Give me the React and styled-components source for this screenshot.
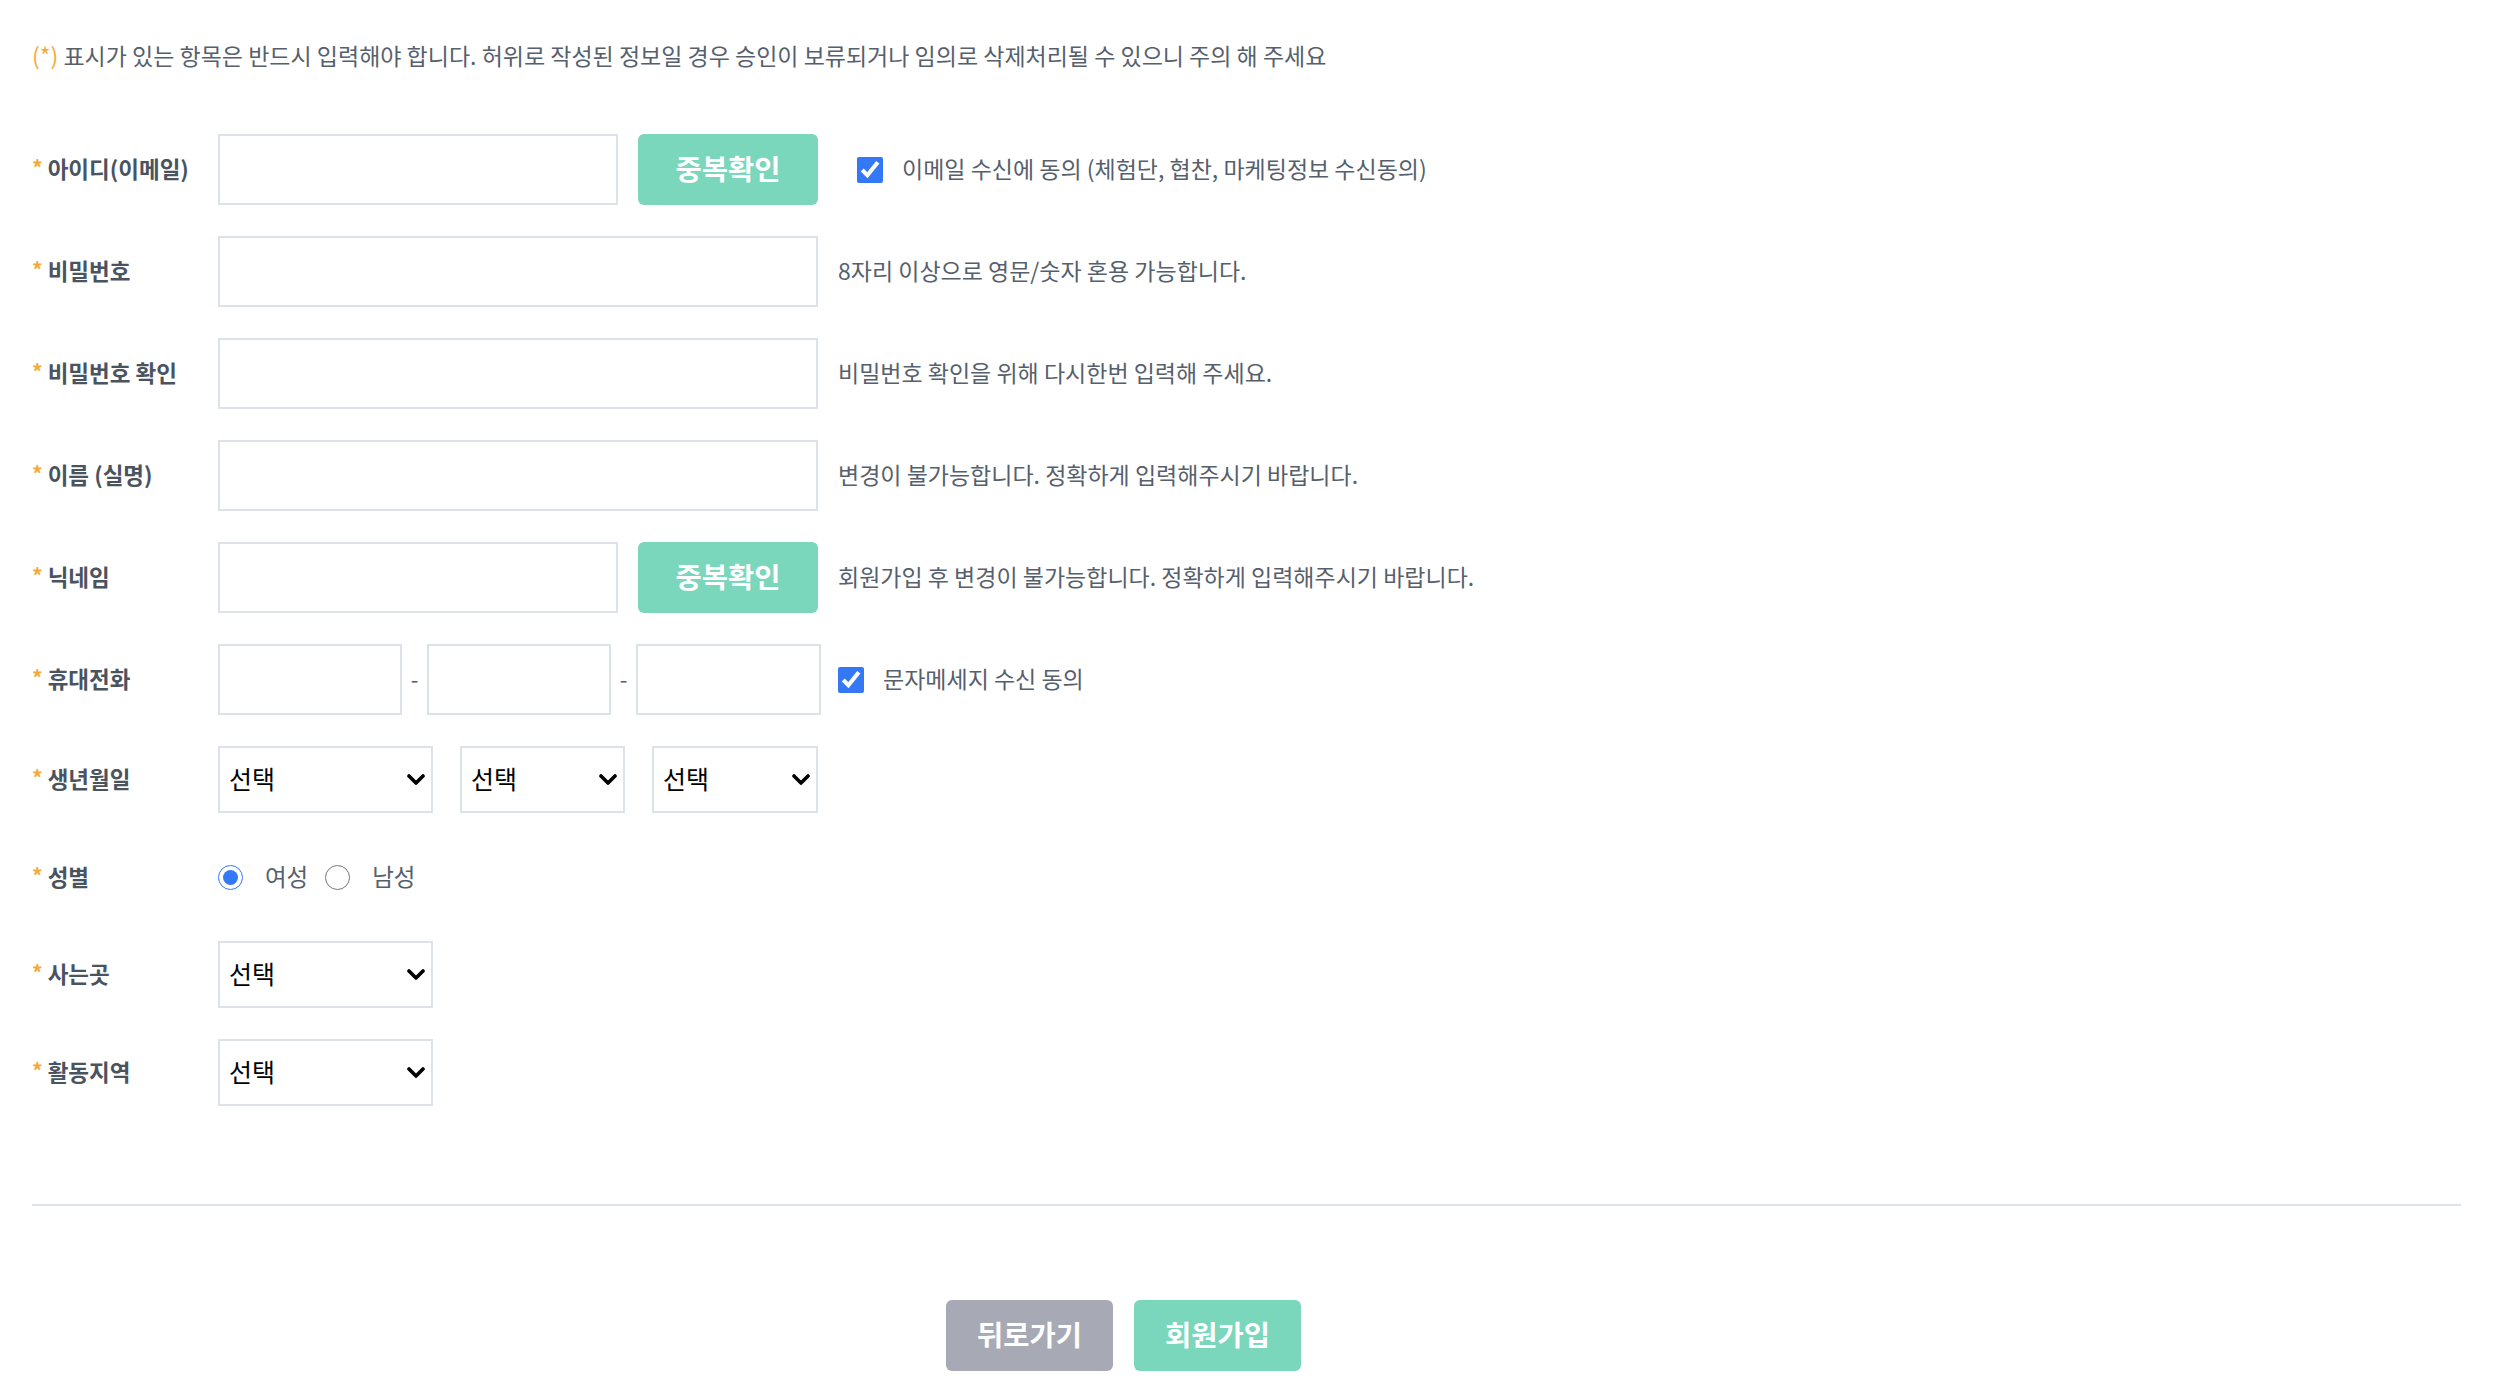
import React from "react";
import styled, { createGlobalStyle } from "styled-components";

const GlobalStyle = createGlobalStyle`
  body {
    margin: 0;
    background: #ffffff;
    font-family: "Noto Sans CJK KR", "Noto Sans", sans-serif;
  }
`;

const Page = styled.div`
  padding: 40px 33px 22px 32px;
`;

const Notice = styled.p`
  margin: 0;
  font-size: 23px;
  line-height: 30px;
  color: #56606c;
`;

const Star = styled.span`
  color: #f5a93a;
`;

const Form = styled.div`
  display: flex;
  flex-direction: column;
  gap: 31px;
  margin-top: 64px;
`;

const Row = styled.div`
  display: flex;
  align-items: center;
  height: ${(p) => p.$h || 71}px;
`;

const Label = styled.div`
  display: flex;
  align-items: flex-start;
  width: 186px;
  flex-shrink: 0;
  padding-bottom: 3px;
  font-size: 22.5px;
  font-weight: 700;
  color: #4a5360;
`;

const Req = styled.span`
  color: #f5a93a;
  font-size: 21px;
  font-weight: 700;
  line-height: 1;
  margin: 5px 5px 0 0;
`;

const Field = styled.div`
  display: flex;
  align-items: center;
  gap: ${(p) => (p.$gap != null ? p.$gap : 20)}px;
`;

const TextInput = styled.input`
  box-sizing: border-box;
  width: ${(p) => p.$w}px;
  height: 71px;
  border: 2px solid #dde1ea;
  background: #fff;
  padding: 0 12px;
  font-size: 22px;
  font-family: inherit;
  outline: none;
`;

const Button = styled.button`
  box-sizing: border-box;
  width: ${(p) => p.$w || 180}px;
  height: 71px;
  padding: 0 0 4px;
  border: none;
  border-radius: 6px;
  background: ${(p) => (p.$gray ? "#a7a9b4" : "#7ad7bc")};
  color: #ffffff;
  font-family: inherit;
  font-size: 28.5px;
  font-weight: 700;
  cursor: pointer;
`;

const Help = styled.span`
  padding-bottom: 3px;
  font-size: 23px;
  color: #56606c;
`;

const Agree = styled.label`
  display: flex;
  align-items: center;
  gap: 19px;
  margin-left: ${(p) => p.$ml || 0}px;
  padding-bottom: 3px;
  font-size: 23px;
  color: #56606c;
`;

const Check = styled.input.attrs({ type: "checkbox" })`
  width: 26px;
  height: 26px;
  margin: 3px 0 0;
  accent-color: #3478f6;
`;

const Phone = styled.div`
  display: flex;
  align-items: center;
`;

const Dash = styled.span`
  width: 25px;
  padding-bottom: 3px;
  text-align: center;
  font-size: 22px;
  color: #56606c;
`;

const SelectGroup = styled.div`
  display: flex;
  gap: 27px;
`;

const SelectWrap = styled.div`
  position: relative;
  width: ${(p) => p.$w}px;
`;

const Select = styled.select`
  box-sizing: border-box;
  appearance: none;
  width: 100%;
  height: 67px;
  border: 2px solid #dde1ea;
  border-radius: 0;
  background: #fff;
  padding: 0 34px 3px 9px;
  font-family: inherit;
  font-size: 25px;
  color: #000;
  outline: none;
`;

const Chevron = styled.svg`
  position: absolute;
  right: 8px;
  top: 50%;
  transform: translateY(-50%);
  pointer-events: none;
`;

const RadioGroup = styled.div`
  display: flex;
  align-items: center;
`;

const RadioLabel = styled.label`
  display: flex;
  align-items: center;
  gap: 22px;
  margin-right: 17px;
  padding-bottom: 3px;
  font-size: 23.5px;
  color: #56606c;
`;

const Radio = styled.input.attrs({ type: "radio" })`
  width: 25px;
  height: 25px;
  margin: 4px 0 0;
  accent-color: #3478f6;
`;

const Divider = styled.hr`
  margin: 98px 0 0;
  border: none;
  border-top: 2px solid #dee2ea;
`;

const Actions = styled.div`
  display: flex;
  gap: 21px;
  margin-top: 94px;
  padding-left: 914px;
`;

function Picker({ w }) {
  return (
    <SelectWrap $w={w}>
      <Select defaultValue="">
        <option value="">선택</option>
      </Select>
      <Chevron width="18" height="12" viewBox="0 0 18 12">
        <polyline points="2,2 9,9 16,2" fill="none" stroke="#000" strokeWidth="3.6" strokeLinecap="round" strokeLinejoin="round" />
      </Chevron>
    </SelectWrap>
  );
}

function FieldLabel({ children }) {
  return (
    <Label>
      <Req>*</Req>
      <span>{children}</span>
    </Label>
  );
}

export default function App() {
  return (
    <Page>
      <GlobalStyle />
      <Notice>
        <Star>(*)</Star> 표시가 있는 항목은 반드시 입력해야 합니다. 허위로 작성된 정보일 경우 승인이 보류되거나 임의로 삭제처리될 수 있으니 주의 해 주세요
      </Notice>

      <Form>
        <Row>
          <FieldLabel>아이디(이메일)</FieldLabel>
          <Field>
            <TextInput $w={400} />
            <Button>중복확인</Button>
            <Agree $ml={19}>
              <Check defaultChecked />
              이메일 수신에 동의 (체험단, 협찬, 마케팅정보 수신동의)
            </Agree>
          </Field>
        </Row>

        <Row>
          <FieldLabel>비밀번호</FieldLabel>
          <Field>
            <TextInput type="password" $w={600} />
            <Help>8자리 이상으로 영문/숫자 혼용 가능합니다.</Help>
          </Field>
        </Row>

        <Row>
          <FieldLabel>비밀번호 확인</FieldLabel>
          <Field>
            <TextInput type="password" $w={600} />
            <Help>비밀번호 확인을 위해 다시한번 입력해 주세요.</Help>
          </Field>
        </Row>

        <Row>
          <FieldLabel>이름 (실명)</FieldLabel>
          <Field>
            <TextInput $w={600} />
            <Help>변경이 불가능합니다. 정확하게 입력해주시기 바랍니다.</Help>
          </Field>
        </Row>

        <Row>
          <FieldLabel>닉네임</FieldLabel>
          <Field>
            <TextInput $w={400} />
            <Button>중복확인</Button>
            <Help>회원가입 후 변경이 불가능합니다. 정확하게 입력해주시기 바랍니다.</Help>
          </Field>
        </Row>

        <Row>
          <FieldLabel>휴대전화</FieldLabel>
          <Field $gap={17}>
            <Phone>
              <TextInput $w={184} />
              <Dash>-</Dash>
              <TextInput $w={184} />
              <Dash>-</Dash>
              <TextInput $w={185} />
            </Phone>
            <Agree>
              <Check defaultChecked />
              문자메세지 수신 동의
            </Agree>
          </Field>
        </Row>

        <Row $h={67}>
          <FieldLabel>생년월일</FieldLabel>
          <SelectGroup>
            <Picker w={215} />
            <Picker w={165} />
            <Picker w={166} />
          </SelectGroup>
        </Row>

        <Row $h={66}>
          <FieldLabel>성별</FieldLabel>
          <RadioGroup>
            <RadioLabel>
              <Radio name="gender" defaultChecked />
              여성
            </RadioLabel>
            <RadioLabel>
              <Radio name="gender" />
              남성
            </RadioLabel>
          </RadioGroup>
        </Row>

        <Row $h={67}>
          <FieldLabel>사는곳</FieldLabel>
          <Picker w={215} />
        </Row>

        <Row $h={67}>
          <FieldLabel>활동지역</FieldLabel>
          <Picker w={215} />
        </Row>
      </Form>

      <Divider />

      <Actions>
        <Button $gray $w={167}>뒤로가기</Button>
        <Button $w={167}>회원가입</Button>
      </Actions>
    </Page>
  );
}
